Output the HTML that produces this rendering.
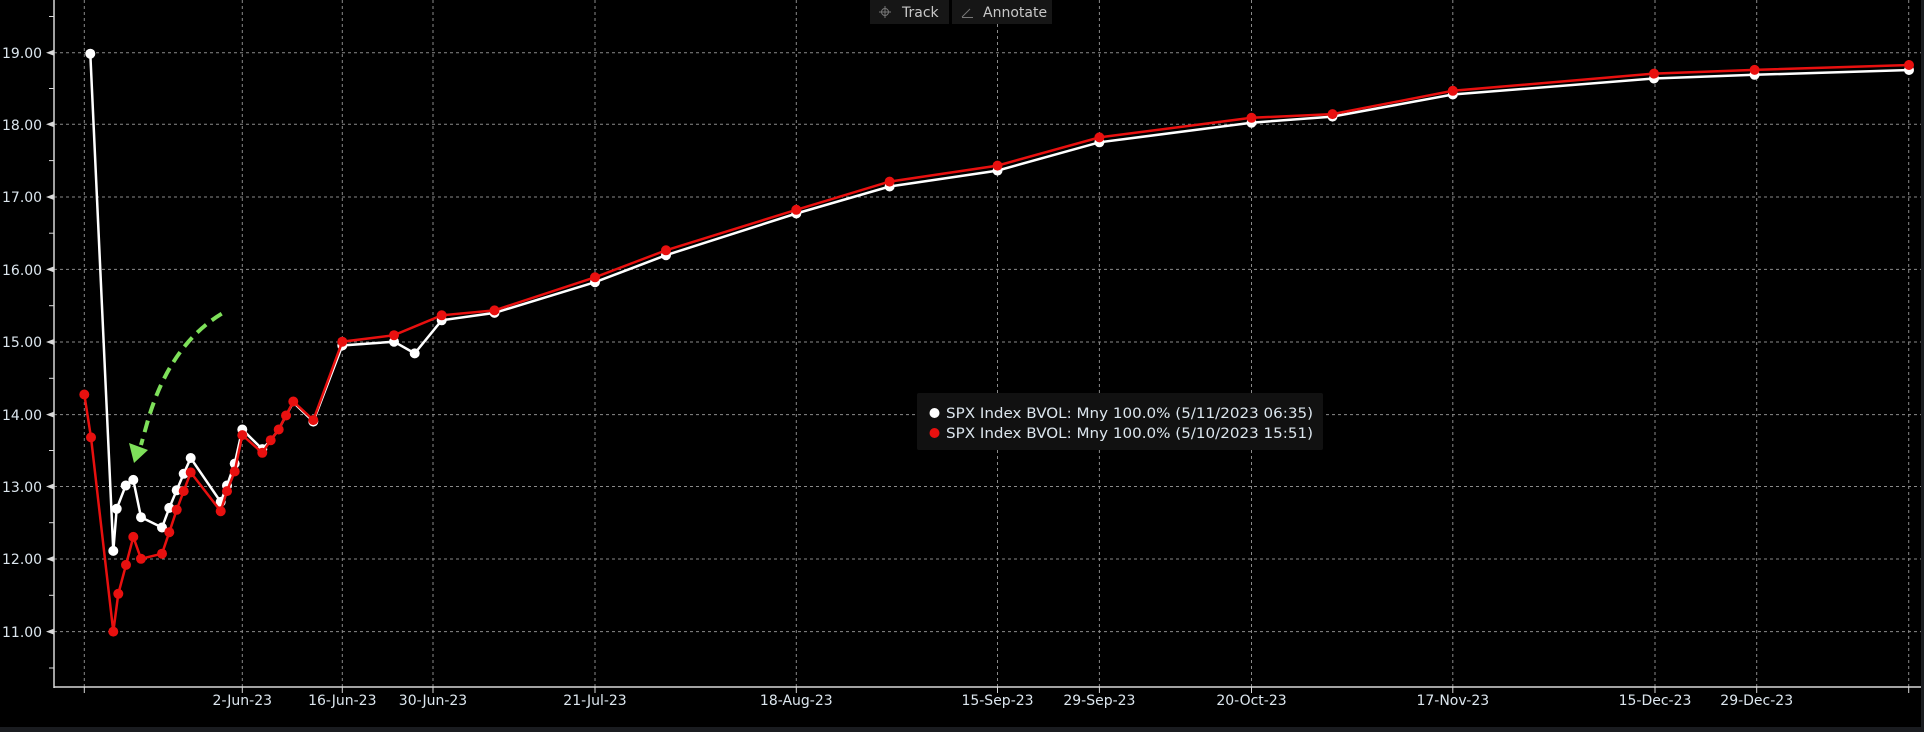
<!DOCTYPE html>
<html><head><meta charset="utf-8"><style>
html,body{margin:0;padding:0;background:#000;width:1924px;height:732px;overflow:hidden}
svg{display:block}
text{font-family:"DejaVu Sans","Liberation Sans",sans-serif}
</style></head><body>
<svg width="1924" height="732" viewBox="0 0 1924 732" xmlns="http://www.w3.org/2000/svg">
<rect width="1924" height="732" fill="#000"/>
<rect x="0" y="727" width="1924" height="5" fill="#1a1c20"/>
<rect x="1921" y="0" width="3" height="727" fill="#1a1c20"/>
<g stroke="#8a8a8a" stroke-width="1" stroke-dasharray="3,3">
<line x1="54" x2="1921" y1="52.8" y2="52.8"/><line x1="54" x2="1921" y1="124.2" y2="124.2"/>
<line x1="54" x2="1921" y1="197" y2="197"/><line x1="54" x2="1921" y1="269.4" y2="269.4"/>
<line x1="54" x2="1921" y1="342" y2="342"/><line x1="54" x2="1921" y1="414.6" y2="414.6"/>
<line x1="54" x2="1921" y1="486.5" y2="486.5"/><line x1="54" x2="1921" y1="559" y2="559"/>
<line x1="54" x2="1921" y1="631.6" y2="631.6"/>
<line y1="0" y2="687" x1="84.3" x2="84.3"/><line y1="0" y2="687" x1="242.3" x2="242.3"/>
<line y1="0" y2="687" x1="342.3" x2="342.3"/><line y1="0" y2="687" x1="433" x2="433"/>
<line y1="0" y2="687" x1="595" x2="595"/><line y1="0" y2="687" x1="796.3" x2="796.3"/>
<line y1="0" y2="687" x1="997.5" x2="997.5"/><line y1="0" y2="687" x1="1099.4" x2="1099.4"/>
<line y1="0" y2="687" x1="1251.5" x2="1251.5"/><line y1="0" y2="687" x1="1452.8" x2="1452.8"/>
<line y1="0" y2="687" x1="1655" x2="1655"/><line y1="0" y2="687" x1="1756.7" x2="1756.7"/>
<line y1="0" y2="687" x1="1908.7" x2="1908.7"/>
</g>
<g stroke="#d8d8d8" stroke-width="1.5">
<line x1="54" y1="0" x2="54" y2="688"/><line x1="54" y1="687" x2="1921" y2="687"/>
</g>
<g stroke="#d8d8d8" stroke-width="1">
<line x1="49" x2="54" y1="16.5" y2="16.5"/><line x1="49" x2="54" y1="88.5" y2="88.5"/><line x1="49" x2="54" y1="160.6" y2="160.6"/><line x1="49" x2="54" y1="233.2" y2="233.2"/><line x1="49" x2="54" y1="305.7" y2="305.7"/><line x1="49" x2="54" y1="378.3" y2="378.3"/><line x1="49" x2="54" y1="450.5" y2="450.5"/><line x1="49" x2="54" y1="522.7" y2="522.7"/><line x1="49" x2="54" y1="595.3" y2="595.3"/><line x1="49" x2="54" y1="668" y2="668"/>
<line y1="687" y2="693" x1="84.3" x2="84.3"/><line y1="687" y2="693" x1="242.3" x2="242.3"/><line y1="687" y2="693" x1="342.3" x2="342.3"/><line y1="687" y2="693" x1="433" x2="433"/><line y1="687" y2="693" x1="595" x2="595"/><line y1="687" y2="693" x1="796.3" x2="796.3"/><line y1="687" y2="693" x1="997.5" x2="997.5"/><line y1="687" y2="693" x1="1099.4" x2="1099.4"/><line y1="687" y2="693" x1="1251.5" x2="1251.5"/><line y1="687" y2="693" x1="1452.8" x2="1452.8"/><line y1="687" y2="693" x1="1655" x2="1655"/><line y1="687" y2="693" x1="1756.7" x2="1756.7"/><line y1="687" y2="693" x1="1908.7" x2="1908.7"/>
</g>
<g fill="#d8d8d8"><path d="M46 52.8l8-3v6z"/><path d="M46 124.2l8-3v6z"/><path d="M46 197l8-3v6z"/><path d="M46 269.4l8-3v6z"/><path d="M46 342l8-3v6z"/><path d="M46 414.6l8-3v6z"/><path d="M46 486.5l8-3v6z"/><path d="M46 559l8-3v6z"/><path d="M46 631.6l8-3v6z"/></g>
<g fill="#dce6ee" font-size="14" text-anchor="start">
<text x="2" y="58">19.00</text><text x="2" y="130">18.00</text><text x="2" y="202">17.00</text><text x="2" y="275">16.00</text><text x="2" y="347">15.00</text><text x="2" y="420">14.00</text><text x="2" y="492">13.00</text><text x="2" y="564">12.00</text><text x="2" y="637">11.00</text>
</g>
<g fill="#dce6ee" font-size="14" text-anchor="middle">
<text x="242.3" y="705">2-Jun-23</text><text x="342.3" y="705">16-Jun-23</text><text x="433" y="705">30-Jun-23</text><text x="595" y="705">21-Jul-23</text><text x="796.3" y="705">18-Aug-23</text><text x="997.5" y="705">15-Sep-23</text><text x="1099.4" y="705">29-Sep-23</text><text x="1251.5" y="705">20-Oct-23</text><text x="1452.8" y="705">17-Nov-23</text><text x="1655" y="705">15-Dec-23</text><text x="1756.7" y="705">29-Dec-23</text>
</g>
<g>
<polyline fill="none" stroke="#fff" stroke-width="2.5" points="90.3,53.7 113.3,550.9 116.7,508.8 125.7,485.5 133.3,479.9 141,517.2 162,527.5 169.3,507.9 176.7,490.2 183.7,473.8 190.7,458 220.7,501.9 227,485.5 234.7,463.6 242.3,429.5 262.3,449.1 270.7,440.2 278.7,429.5 286,415.5 293.3,402.4 313.3,421.6 342.3,345.5 394,341.7 414.7,353.4 441.7,320.3 494.5,312.9 595,282.2 666,255.2 796.3,213.5 889.6,186.5 997.5,170.6 1099.4,142.3 1251.5,122.7 1332.5,116.6 1452.8,94.5 1654,78.5 1754.6,74.8 1909,70"/>
<g fill="#fff">
<circle cx="90.3" cy="53.7" r="5"/><circle cx="113.3" cy="550.9" r="5"/><circle cx="116.7" cy="508.8" r="5"/><circle cx="125.7" cy="485.5" r="5"/><circle cx="133.3" cy="479.9" r="5"/><circle cx="141" cy="517.2" r="5"/><circle cx="162" cy="527.5" r="5"/><circle cx="169.3" cy="507.9" r="5"/><circle cx="176.7" cy="490.2" r="5"/><circle cx="183.7" cy="473.8" r="5"/><circle cx="190.7" cy="458" r="5"/><circle cx="220.7" cy="501.9" r="5"/><circle cx="227" cy="485.5" r="5"/><circle cx="234.7" cy="463.6" r="5"/><circle cx="242.3" cy="429.5" r="5"/><circle cx="262.3" cy="449.1" r="5"/><circle cx="313.3" cy="421.6" r="5"/><circle cx="342.3" cy="345.5" r="5"/><circle cx="394" cy="341.7" r="5"/><circle cx="414.7" cy="353.4" r="5"/><circle cx="441.7" cy="320.3" r="5"/><circle cx="494.5" cy="312.9" r="5"/><circle cx="595" cy="282.2" r="5"/><circle cx="666" cy="255.2" r="5"/><circle cx="796.3" cy="213.5" r="5"/><circle cx="889.6" cy="186.5" r="5"/><circle cx="997.5" cy="170.6" r="5"/><circle cx="1099.4" cy="142.3" r="5"/><circle cx="1251.5" cy="122.7" r="5"/><circle cx="1332.5" cy="116.6" r="5"/><circle cx="1452.8" cy="94.5" r="5"/><circle cx="1654" cy="78.5" r="5"/><circle cx="1754.6" cy="74.8" r="5"/><circle cx="1909" cy="70" r="5"/>
</g></g>
<polyline fill="none" stroke="#e8100f" stroke-width="2.5" points="84.3,394.5 91,437.4 113.3,631.6 118.3,593.8 126,564.9 133.3,536.9 141,558.8 162,553.7 169.3,532.2 176.7,509.8 183.7,491.1 190.7,472.4 220.7,511.2 227,491.1 234.7,471.5 242.3,435.1 262.3,452.8 270.7,440.2 278.7,429.5 286,415.5 293.3,401.5 313.3,420.1 342.3,341.7 394,335.2 441.7,315.3 494.5,310.4 595,277.3 666,250.3 796.3,209.8 889.6,181.6 997.5,165.6 1099.4,137.4 1251.5,117.8 1332.5,114.1 1452.8,90.8 1654,73.6 1754.6,69.9 1909,65"/>
<g fill="#e8100f">
<circle cx="84.3" cy="394.5" r="5"/><circle cx="91" cy="437.4" r="5"/><circle cx="113.3" cy="631.6" r="5"/><circle cx="118.3" cy="593.8" r="5"/><circle cx="126" cy="564.9" r="5"/><circle cx="133.3" cy="536.9" r="5"/><circle cx="141" cy="558.8" r="5"/><circle cx="162" cy="553.7" r="5"/><circle cx="169.3" cy="532.2" r="5"/><circle cx="176.7" cy="509.8" r="5"/><circle cx="183.7" cy="491.1" r="5"/><circle cx="190.7" cy="472.4" r="5"/><circle cx="220.7" cy="511.2" r="5"/><circle cx="227" cy="491.1" r="5"/><circle cx="234.7" cy="471.5" r="5"/><circle cx="242.3" cy="435.1" r="5"/><circle cx="262.3" cy="452.8" r="5"/><circle cx="270.7" cy="440.2" r="5"/><circle cx="278.7" cy="429.5" r="5"/><circle cx="286" cy="415.5" r="5"/><circle cx="293.3" cy="401.5" r="5"/><circle cx="313.3" cy="420.1" r="5"/><circle cx="342.3" cy="341.7" r="5"/><circle cx="394" cy="335.2" r="5"/><circle cx="441.7" cy="315.3" r="5"/><circle cx="494.5" cy="310.4" r="5"/><circle cx="595" cy="277.3" r="5"/><circle cx="666" cy="250.3" r="5"/><circle cx="796.3" cy="209.8" r="5"/><circle cx="889.6" cy="181.6" r="5"/><circle cx="997.5" cy="165.6" r="5"/><circle cx="1099.4" cy="137.4" r="5"/><circle cx="1251.5" cy="117.8" r="5"/><circle cx="1332.5" cy="114.1" r="5"/><circle cx="1452.8" cy="90.8" r="5"/><circle cx="1654" cy="73.6" r="5"/><circle cx="1754.6" cy="69.9" r="5"/><circle cx="1909" cy="65" r="5"/>
</g>
<path d="M221.7,313.7 Q170,345 148,420 L141,445" fill="none" stroke="#7ee05a" stroke-width="4" stroke-dasharray="12,7"/>
<path d="M134,463 L129,443 L148,450 Z" fill="#7ee05a"/>
<rect x="870" y="0" width="79" height="24" fill="#161616"/>
<rect x="952" y="0" width="100" height="24" fill="#161616"/>
<g stroke="#777" stroke-width="1" fill="none"><circle cx="885" cy="12" r="3.5"/><line x1="879" y1="12" x2="891" y2="12"/><line x1="885" y1="6" x2="885" y2="18"/><line x1="962" y1="17" x2="970" y2="9"/><line x1="962" y1="17.5" x2="973" y2="17.5"/></g>
<text x="902" y="17" fill="#c8c8c8" font-size="14">Track</text>
<text x="983" y="17" fill="#c8c8c8" font-size="14">Annotate</text>
<rect x="917" y="393" width="406" height="57" rx="2" fill="#111"/>
<circle cx="934.5" cy="413" r="5" fill="#fff"/><circle cx="934.5" cy="433" r="5" fill="#e8100f"/>
<text x="946" y="418" fill="#dce6ee" font-size="14" textLength="367" lengthAdjust="spacingAndGlyphs">SPX Index BVOL: Mny 100.0% (5/11/2023 06:35)</text>
<text x="946" y="438" fill="#dce6ee" font-size="14" textLength="367" lengthAdjust="spacingAndGlyphs">SPX Index BVOL: Mny 100.0% (5/10/2023 15:51)</text>
</svg>
</body></html>
